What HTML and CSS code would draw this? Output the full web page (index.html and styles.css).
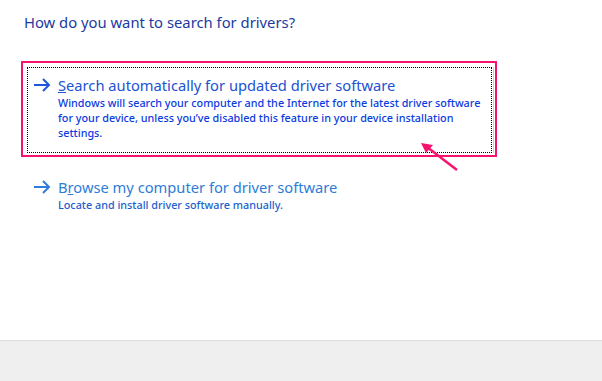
FILE: index.html
```html
<!DOCTYPE html>
<html lang="en">
<head>
	<meta charset="UTF-8">
	<title>Update Drivers</title>
	<link rel="stylesheet" href="styles.css">
</head>
<body>
	<div class="page">
		<h1 class="heading">How do you want to search for drivers?</h1>
		<div class="option selected">
			<div class="edge">
				<div class="focus">
					<svg class="arrow" width="18" height="14" viewBox="0 0 18 14">
						<path d="M1 7H16M10 1L16 7L10 13" fill="none" stroke="currentColor" stroke-width="2"/>
					</svg>
					<div class="text">
						<div class="title"><u>S</u>earch automatically for updated driver software</div>
						<div class="desc">Windows will search your computer and the Internet for the latest driver software for your device, unless you’ve disabled this feature in your device installation settings.</div>
					</div>
				</div>
			</div>
		</div>
		<div class="option">
			<div class="edge">
				<div class="focus">
					<svg class="arrow" width="18" height="14" viewBox="0 0 18 14">
						<path d="M1 7H16M10 1L16 7L10 13" fill="none" stroke="currentColor" stroke-width="2"/>
					</svg>
					<div class="text">
						<div class="title">B<u>r</u>owse my computer for driver software</div>
						<div class="desc">Locate and install driver software manually.</div>
					</div>
				</div>
			</div>
		</div>
		<!-- pointer arrow drawn over the screenshot -->
		<svg class="pointer" width="50" height="40" viewBox="0 0 50 40">
			<path d="M37 29L7 6" stroke="#f5136f" stroke-width="2.5" fill="none"/>
			<path d="M1 2L13 4L6 12Z" fill="#f5136f"/>
		</svg>
	</div>
	<div class="footer"></div>
</body>
</html>
```

FILE: styles.css
```css
*{
	margin: 0;
	padding: 0;
	box-sizing: border-box;
}
body{
	width: 602px;
	height: 381px;
	background: #fff;
	font-family: "Noto Sans", "Open Sans", sans-serif;
	overflow: hidden;
}
.page{
	position: relative;
	height: 340px;
	padding: 12px 0 0 21px;
}
.heading{
	font-size: 14.8px;
	font-weight: 400;
	line-height: 20px;
	color: #1c3aa0;
	padding-left: 3px;
	margin-bottom: 29px;
}
.option{
	width: 476px;
	border: 2px solid transparent;
	padding: 4px 1px 2px 4px;
	margin-bottom: 6px;
	color: #2d7dd8;
}
.option.selected{
	border-color: #f5136f;
	color: #2052d2;
}
.edge{
	border-right: 1px solid transparent;
	padding-right: 1px;
}
.selected .edge{
	border-right-color: #cfcfcf;
}
.focus{
	display: flex;
	border: 1px dotted transparent;
	padding: 7px 1px 12px 5px;
}
.selected .focus{
	border-color: #000;
}
.arrow{
	flex: none;
	margin: 3px 7px 0 0;
}
.selected .arrow{
	color: #1f55d8;
}
.title{
	font-size: 14.7px;
	line-height: 20px;
}
.desc{
	font-size: 10.8px;
	font-weight: 500;
	line-height: 15px;
	color: #1c5fcc;
}
.selected .desc{
	color: #0b3ae0;
}
.pointer{
	position: absolute;
	left: 420px;
	top: 141px;
}
.footer{
	height: 41px;
	background: #efefef;
	border-top: 1px solid #dcdcdc;
}
```
